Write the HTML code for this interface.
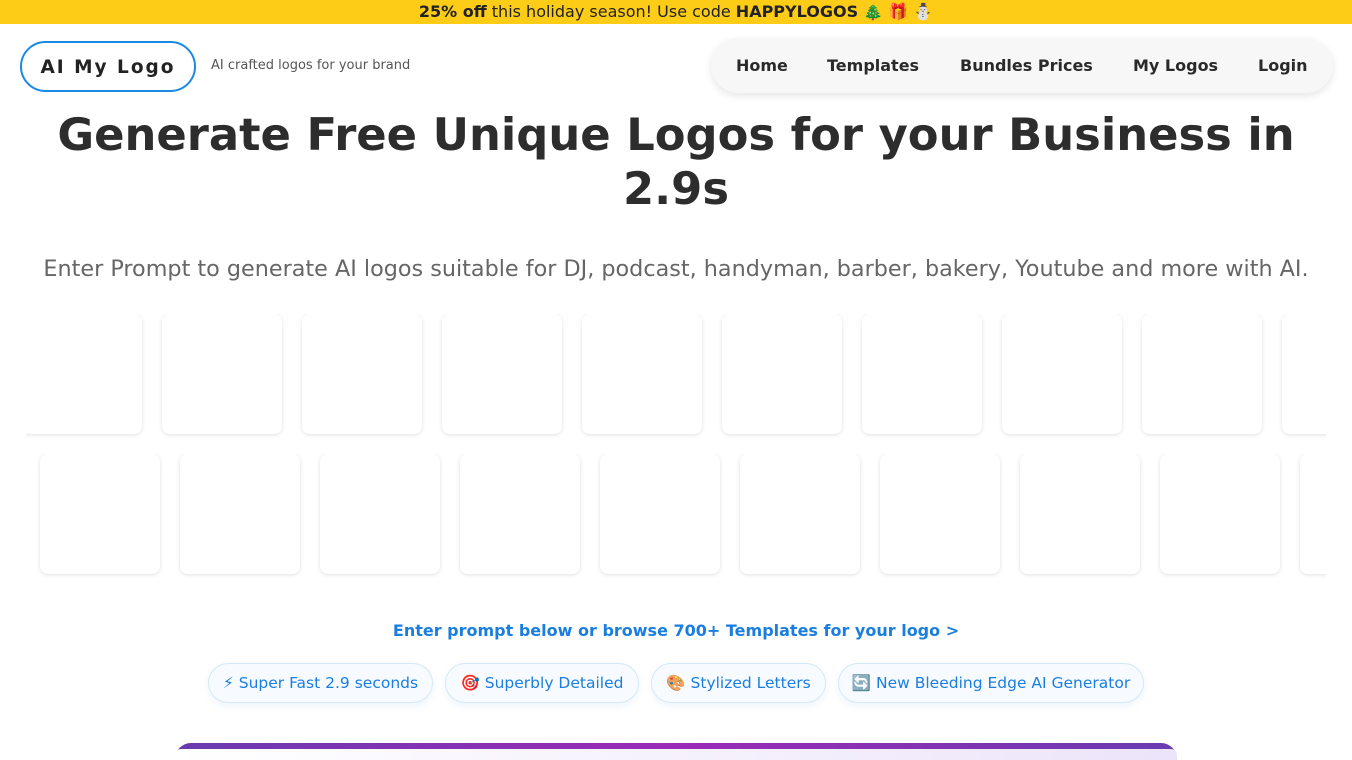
<!DOCTYPE html>
<html><head><meta charset="utf-8">
<style>
*{box-sizing:border-box;margin:0;padding:0}
html,body{width:1352px;height:760px;overflow:hidden}
body{background:#fff;font-family:"DejaVu Sans","Liberation Sans",sans-serif;color:#333;position:relative}
.bar{height:24px;background:#fccc16;text-align:center;font-size:16px;line-height:24px;color:#222}
.logo{position:absolute;left:20px;top:41px;width:176px;height:51px;border:2px solid #1a8ae5;border-radius:26px;font-weight:bold;font-size:18.5px;letter-spacing:2px;text-align:center;line-height:50px;color:#222}
.tag{position:absolute;left:211px;top:58px;font-size:13px;color:#555}
.nav{position:absolute;left:711px;top:38px;width:622px;height:55px;background:#f7f7f7;border-radius:28px;box-shadow:0 3px 8px rgba(0,0,0,.1);font-weight:bold;font-size:16px;color:#2a2a2a}
.nav span{position:absolute;top:18px}
h1{position:absolute;left:0;width:1352px;top:108px;text-align:center;font-size:44.8px;line-height:54px;color:#2d2d2d}
.sub{position:absolute;left:0;width:1352px;top:256px;text-align:center;font-size:22.3px;color:#666;white-space:nowrap}
.row{position:absolute;left:26px;width:1300px;height:140px;overflow:hidden}
.card{position:absolute;width:120px;height:120px;top:0;background:#fff;border-radius:8px;box-shadow:0 1px 4px rgba(0,0,0,.12)}
.link{position:absolute;left:0;width:1352px;top:621px;text-align:center;color:#1a7ee0;font-weight:bold;font-size:16px}
.chip{position:absolute;top:663px;height:40px;border:1px solid #d5e8f8;border-radius:20px;background:#f7fbff;color:#1a7ee0;font-size:15.5px;line-height:38px;text-align:center;white-space:nowrap;box-shadow:0 3px 8px rgba(30,120,220,.08)}
.box{position:absolute;left:175px;top:743px;width:1002px;height:40px;border-radius:16px;background:linear-gradient(90deg,#6a3bb0,#9b2bb6 50%,#6a3bb0)}
.box div{position:absolute;left:0;right:0;top:6px;bottom:0;background:linear-gradient(90deg,#fff,#ece4fa);border-radius:6px 6px 0 0}
</style></head><body>
<div class="bar"><b>25% off</b> this holiday season! Use code <b>HAPPYLOGOS</b> 🎄 🎁 ⛄</div>
<div class="logo">AI My Logo</div>
<div class="tag">AI crafted logos for your brand</div>
<div class="nav"><span style="left:25px">Home</span><span style="left:116px">Templates</span><span style="left:249px">Bundles Prices</span><span style="left:422px">My Logos</span><span style="left:547px">Login</span></div>
<h1>Generate Free Unique Logos for your Business in<br>2.9s</h1>
<div class="sub">Enter Prompt to generate AI logos suitable for DJ, podcast, handyman, barber, bakery, Youtube and more with AI.</div>
<div class="row" style="top:314px">
<div class="card" style="left:-4px"></div><div class="card" style="left:136px"></div><div class="card" style="left:276px"></div><div class="card" style="left:416px"></div><div class="card" style="left:556px"></div><div class="card" style="left:696px"></div><div class="card" style="left:836px"></div><div class="card" style="left:976px"></div><div class="card" style="left:1116px"></div><div class="card" style="left:1256px"></div>
</div>
<div class="row" style="top:454px">
<div class="card" style="left:14px"></div><div class="card" style="left:154px"></div><div class="card" style="left:294px"></div><div class="card" style="left:434px"></div><div class="card" style="left:574px"></div><div class="card" style="left:714px"></div><div class="card" style="left:854px"></div><div class="card" style="left:994px"></div><div class="card" style="left:1134px"></div><div class="card" style="left:1274px"></div>
</div>
<div class="link">Enter prompt below or browse 700+ Templates for your logo &gt;</div>
<div class="chip" style="left:208px;width:225px">⚡ Super Fast 2.9 seconds</div>
<div class="chip" style="left:445px;width:194px">🎯 Superbly Detailed</div>
<div class="chip" style="left:651px;width:175px">🎨 Stylized Letters</div>
<div class="chip" style="left:838px;width:306px">🔄 New Bleeding Edge AI Generator</div>
<div class="box"><div></div></div>
</body></html>
